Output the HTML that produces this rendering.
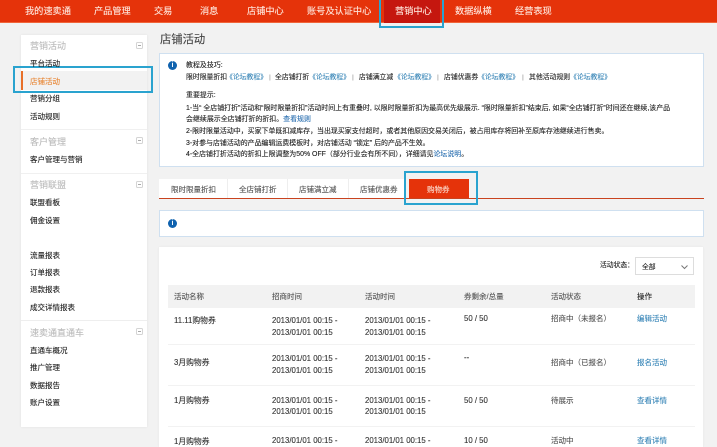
<!DOCTYPE html>
<html lang="zh"><head><meta charset="utf-8"><title>店铺活动</title>
<style>
html,body{margin:0;padding:0}
body{width:717px;height:447px;overflow:hidden;background:#f2f2f2;position:relative;font-family:"Liberation Sans","Noto Sans CJK SC",sans-serif;color:#222}
#w{position:absolute;left:0;top:0;width:717px;height:447px;overflow:hidden;filter:blur(.3px)}
.b{position:absolute;box-sizing:border-box}
.t{position:absolute;white-space:nowrap;height:12px;line-height:12px;margin-top:-5.5px;font-size:7.5px;-webkit-text-stroke:.12px currentColor}
.n{color:#ffe6dc;font-size:9.2px}
.h{color:#bbb;font-size:9px}
.i{font-size:6.95px;color:#222;left:186px}
.s{font-size:6.85px;color:#222}
.l{color:#3a87b8}
.g{color:#555}
.d{font-size:7.8px;color:#333}
.m{position:absolute;left:136px;width:5px;height:5px;border:1px solid #d4d4d4;border-radius:1.5px;box-sizing:content-box;margin-top:-3.5px}
.m:after{content:"";position:absolute;left:1px;right:1px;top:2px;height:1px;background:#aaa}
.c{position:absolute;width:9px;height:9px;border-radius:50%;background:#0f62ae;color:#fff;font:bold 7px/9px "Liberation Sans",sans-serif;text-align:center}
.tb{font-size:7.5px;color:#555}
</style></head><body><div id="w">
<div class="b" style="left:0;top:0;width:717px;height:23px;background:#e5330a;border-bottom:1px solid #f0653a"></div>
<div class="b" style="left:384px;top:0;width:56px;height:23px;background:#c5170f"></div>
<div class="b" style="left:379px;top:0;width:65px;height:28px;border:2px solid #2aa3cf;border-top:0"></div>
<span class="t n" style="left:25px;top:10px">我的速卖通</span>
<span class="t n" style="left:94px;top:10px">产品管理</span>
<span class="t n" style="left:154px;top:10px">交易</span>
<span class="t n" style="left:200px;top:10px">消息</span>
<span class="t n" style="left:247px;top:10px">店铺中心</span>
<span class="t n" style="left:307px;top:10px">账号及认证中心</span>
<span class="t n" style="left:395px;top:10px">营销中心</span>
<span class="t n" style="left:455px;top:10px">数据纵横</span>
<span class="t n" style="left:515px;top:10px">经营表现</span>

<div class="b" style="left:21px;top:35px;width:126px;height:392px;background:#fff;box-shadow:0 0 2px #e2e2e2"></div>
<div class="b" style="left:21px;top:129px;width:126px;height:1px;background:#f0f0f0"></div>
<div class="b" style="left:21px;top:173px;width:126px;height:1px;background:#f0f0f0"></div>
<div class="b" style="left:21px;top:320px;width:126px;height:1px;background:#eee"></div>
<div class="b" style="left:21px;top:71px;width:126px;height:19px;background:#f2f2f2"></div>
<div class="b" style="left:21px;top:71px;width:2px;height:19px;background:#e8702a"></div>
<div class="b" style="left:13px;top:66px;width:140px;height:27px;border:2px solid #2aa3cf"></div>
<span class="t h" style="left:30px;top:45px">营销活动</span><i class="m" style="top:45px"></i>
<span class="t" style="left:30px;top:63px">平台活动</span>
<span class="t" style="left:30px;top:81px;color:#e8893a">店铺活动</span>
<span class="t" style="left:30px;top:98px">营销分组</span>
<span class="t" style="left:30px;top:116px">活动规则</span>
<span class="t h" style="left:30px;top:141px">客户管理</span><i class="m" style="top:140px"></i>
<span class="t" style="left:30px;top:159px">客户管理与营销</span>
<span class="t h" style="left:30px;top:184px">营销联盟</span><i class="m" style="top:184px"></i>
<span class="t" style="left:30px;top:202px">联盟看板</span>
<span class="t" style="left:30px;top:220px">佣金设置</span>
<span class="t" style="left:30px;top:255px">流量报表</span>
<span class="t" style="left:30px;top:272px">订单报表</span>
<span class="t" style="left:30px;top:289px">退款报表</span>
<span class="t" style="left:30px;top:307px">成交详情报表</span>
<span class="t h" style="left:30px;top:332px">速卖通直通车</span><i class="m" style="top:331px"></i>
<span class="t" style="left:30px;top:350px">直通车概况</span>
<span class="t" style="left:30px;top:367px">推广管理</span>
<span class="t" style="left:30px;top:385px">数据报告</span>
<span class="t" style="left:30px;top:402px">账户设置</span>

<span class="t" style="left:160px;top:39px;font-size:11.3px;color:#444">店铺活动</span>
<div class="b" style="left:159px;top:53px;width:545px;height:114px;background:#fff;border:1px solid #cfe0f0"></div>
<span class="c" style="left:168px;top:61px">i</span>
<span class="t i" style="top:65px">教程及技巧:</span>
<span class="t s" style="left:186px;top:77px">限时限量折扣</span><span class="t s l" style="left:226px;top:77px">《论坛教程》</span><span class="t s" style="left:269px;top:77px;color:#999">|</span>
<span class="t s" style="left:275px;top:77px">全店铺打折</span><span class="t s l" style="left:309px;top:77px">《论坛教程》</span><span class="t s" style="left:352px;top:77px;color:#999">|</span>
<span class="t s" style="left:359px;top:77px">店铺满立减</span><span class="t s l" style="left:394px;top:77px">《论坛教程》</span><span class="t s" style="left:437px;top:77px;color:#999">|</span>
<span class="t s" style="left:444px;top:77px">店铺优惠券</span><span class="t s l" style="left:478px;top:77px">《论坛教程》</span><span class="t s" style="left:522px;top:77px;color:#999">|</span>
<span class="t s" style="left:529px;top:77px">其他活动规则</span><span class="t s l" style="left:570px;top:77px">《论坛教程》</span>
<span class="t i" style="top:95px">重要提示:</span>
<span class="t i" style="top:108px">1-当“ 全店铺打折”活动和“限时限量折扣”活动时间上有重叠时, 以限时限量折扣为最高优先级展示. “限时限量折扣”结束后, 如果“全店铺打折”时间还在继续,该产品</span>
<span class="t i" style="top:119px">会继续展示全店铺打折的折扣。<span style="color:#2a6fb0">查看规则</span></span>
<span class="t i" style="top:131px">2-限时限量活动中，买家下单既扣减库存，当出现买家支付超时，或者其他原因交易关闭后，被占用库存将回补至原库存池继续进行售卖。</span>
<span class="t i" style="top:143px">3-对参与店铺活动的产品编辑运费模板时，对店铺活动 “锁定” 后的产品不生效。</span>
<span class="t i" style="top:154px">4-全店铺打折活动的折扣上限调整为50% OFF（部分行业会有所不同），详细请见<span style="color:#2a6fb0">论坛说明</span>。</span>

<div class="b" style="left:159px;top:179px;width:245px;height:19px;background:#fff"></div>
<div class="b" style="left:227px;top:179px;width:1px;height:19px;background:#eee"></div>
<div class="b" style="left:287px;top:179px;width:1px;height:19px;background:#eee"></div>
<div class="b" style="left:348px;top:179px;width:1px;height:19px;background:#eee"></div>
<div class="b" style="left:409px;top:179px;width:60px;height:19px;background:#e5330a"></div>
<div class="b" style="left:159px;top:198px;width:545px;height:1px;background:#c9431f"></div>
<div class="b" style="left:404px;top:171px;width:74px;height:34px;border:2px solid #2aa3cf"></div>
<span class="t tb" style="left:171px;top:189px">限时限量折扣</span>
<span class="t tb" style="left:239px;top:189px">全店铺打折</span>
<span class="t tb" style="left:299px;top:189px">店铺满立减</span>
<span class="t tb" style="left:360px;top:189px">店铺优惠券</span>
<span class="t tb" style="left:427px;top:189px;color:#fbd9cc">购物券</span>

<div class="b" style="left:159px;top:210px;width:545px;height:27px;background:#fff;border:1px solid #cfe0f0"></div>
<span class="c" style="left:168px;top:219px">i</span>

<div class="b" style="left:159px;top:247px;width:544px;height:200px;background:#fff;box-shadow:0 0 2px #e4e4e4"></div>
<span class="t" style="left:600px;top:265px;font-size:6.8px">活动状态：</span>
<div class="b" style="left:635px;top:257px;width:59px;height:18px;border:1px solid #ddd;background:#fff"></div>
<span class="t" style="left:642px;top:267px;font-size:6.8px">全部</span>
<svg class="b" style="left:680px;top:264px" width="9" height="6" viewBox="0 0 9 6"><path d="M1.5 1.5L4.5 4.5L7.5 1.5" fill="none" stroke="#777" stroke-width="1"/></svg>
<div class="b" style="left:168px;top:285px;width:527px;height:23px;background:#f2f2f2"></div>
<div class="b" style="left:168px;top:344px;width:527px;height:1px;background:#f2f2f2"></div>
<div class="b" style="left:168px;top:385px;width:527px;height:1px;background:#f2f2f2"></div>
<div class="b" style="left:168px;top:426px;width:527px;height:1px;background:#f2f2f2"></div>
<span class="t g" style="left:174px;top:296px">活动名称</span>
<span class="t g" style="left:272px;top:296px">招商时间</span>
<span class="t g" style="left:365px;top:296px">活动时间</span>
<span class="t g" style="left:464px;top:296px">券剩余/总量</span>
<span class="t g" style="left:551px;top:296px">活动状态</span>
<span class="t" style="left:637px;top:296px">操作</span>

<span class="t d" style="left:174px;top:320px">11.11购物券</span>
<span class="t d" style="left:272px;top:320px">2013/01/01 00:15 -</span>
<span class="t d" style="left:272px;top:332px">2013/01/01 00:15</span>
<span class="t d" style="left:365px;top:320px">2013/01/01 00:15 -</span>
<span class="t d" style="left:365px;top:332px">2013/01/01 00:15</span>
<span class="t d" style="left:464px;top:318px">50 / 50</span>
<span class="t g" style="left:551px;top:318px">招商中（未报名）</span>
<span class="t l" style="left:637px;top:318px">编辑活动</span>

<span class="t d" style="left:174px;top:362px">3月购物券</span>
<span class="t d" style="left:272px;top:358px">2013/01/01 00:15 -</span>
<span class="t d" style="left:272px;top:370px">2013/01/01 00:15</span>
<span class="t d" style="left:365px;top:358px">2013/01/01 00:15 -</span>
<span class="t d" style="left:365px;top:370px">2013/01/01 00:15</span>
<span class="t d" style="left:464px;top:357px">--</span>
<span class="t g" style="left:551px;top:362px">招商中（已报名）</span>
<span class="t l" style="left:637px;top:362px">报名活动</span>

<span class="t d" style="left:174px;top:400px">1月购物券</span>
<span class="t d" style="left:272px;top:400px">2013/01/01 00:15 -</span>
<span class="t d" style="left:272px;top:411px">2013/01/01 00:15</span>
<span class="t d" style="left:365px;top:400px">2013/01/01 00:15 -</span>
<span class="t d" style="left:365px;top:411px">2013/01/01 00:15</span>
<span class="t d" style="left:464px;top:400px">50 / 50</span>
<span class="t g" style="left:551px;top:400px">待展示</span>
<span class="t l" style="left:637px;top:400px">查看详情</span>

<span class="t d" style="left:174px;top:441px">1月购物券</span>
<span class="t d" style="left:272px;top:440px">2013/01/01 00:15 -</span>
<span class="t d" style="left:365px;top:440px">2013/01/01 00:15 -</span>
<span class="t d" style="left:464px;top:440px">10 / 50</span>
<span class="t g" style="left:551px;top:440px">活动中</span>
<span class="t l" style="left:637px;top:440px">查看详情</span>
</div></body></html>
